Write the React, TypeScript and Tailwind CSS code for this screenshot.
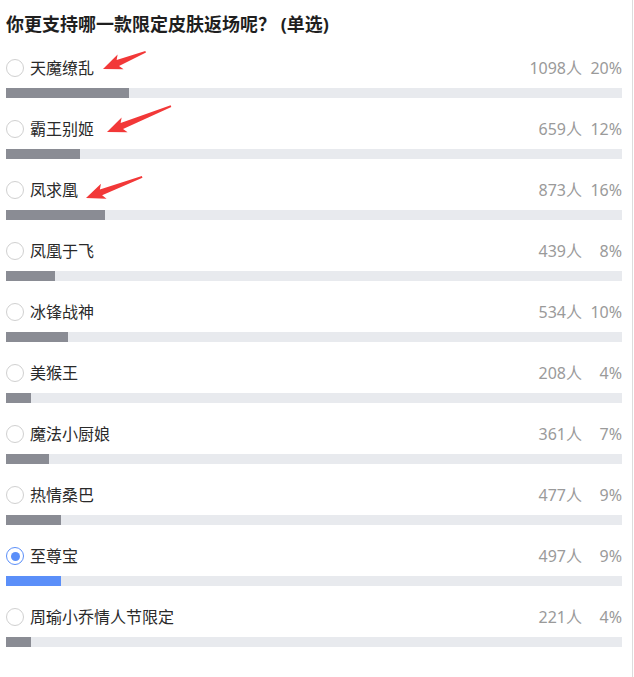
import React from "react";

type Opt = { name: string; count: number; pct: number; selected?: boolean };

const opts: Opt[] = [
  { name: "天魔缭乱", count: 1098, pct: 20 },
  { name: "霸王别姬", count: 659, pct: 12 },
  { name: "凤求凰", count: 873, pct: 16 },
  { name: "凤凰于飞", count: 439, pct: 8 },
  { name: "冰锋战神", count: 534, pct: 10 },
  { name: "美猴王", count: 208, pct: 4 },
  { name: "魔法小厨娘", count: 361, pct: 7 },
  { name: "热情桑巴", count: 477, pct: 9 },
  { name: "至尊宝", count: 497, pct: 9, selected: true },
  { name: "周瑜小乔情人节限定", count: 221, pct: 4 },
];

function Arrow({ x, y, len, angle }: { x: number; y: number; len: number; angle: number }) {
  const H = 19;
  const W = 8;
  const w = 3.2;
  const pts = `0,0 ${H},${-W} ${H - 3},${-w} ${len},${-0.9} ${len},0.9 ${H - 3},${w} ${H},${W}`;
  return <polygon points={pts} fill="#f23838" transform={`translate(${x},${y}) rotate(${angle})`} />;
}

export default function App() {
  return (
    <div
      className="relative h-[677px] w-[633px] border-r border-[#dcdcdc] bg-white pl-[6px] pt-[12px]"
      style={{ fontFamily: '"Noto Sans", "Noto Sans CJK SC", sans-serif' }}
    >
      <div className="h-[24px] text-[18px] leading-[24px] font-bold text-[#1f1f1f]">
        你更支持哪一款限定皮肤返场呢？ (单选)
      </div>
      <div className="mt-[20px] flex flex-col">
        {opts.map((o) => (
          <div key={o.name} className="mb-[19px] w-[616px]">
            <div className="flex h-[24px] items-center">
              {o.selected ? (
                <div className="flex h-[18px] w-[18px] items-center justify-center rounded-full border border-[#5b8ff9]">
                  <div className="h-[9px] w-[9px] rounded-full bg-[#5b8ff9]" />
                </div>
              ) : (
                <div className="h-[18px] w-[18px] rounded-full border border-[#d0d0d0]" />
              )}
              <span className="ml-[6px] text-[16px] leading-[24px] text-[#2a2a2a]">{o.name}</span>
              <span className="ml-auto text-[16px] leading-[24px] text-[#9a9a9a]">{o.count}人</span>
              <span className="ml-[4px] w-[36px] text-right text-[16px] leading-[24px] text-[#9a9a9a]">
                {o.pct}%
              </span>
            </div>
            <div className="mt-[8px] h-[10px] w-full bg-[#e8eaee]">
              <div
                className={o.selected ? "h-full bg-[#5b8ff9]" : "h-full bg-[#8a8c94]"}
                style={{ width: `${o.pct}%` }}
              />
            </div>
          </div>
        ))}
      </div>
      <svg className="pointer-events-none absolute left-0 top-0" width="633" height="677">
        <Arrow x={103} y={69} len={46} angle={-22} />
        <Arrow x={107} y={132} len={69} angle={-22} />
        <Arrow x={86} y={198} len={60} angle={-20.6} />
      </svg>
    </div>
  );
}
